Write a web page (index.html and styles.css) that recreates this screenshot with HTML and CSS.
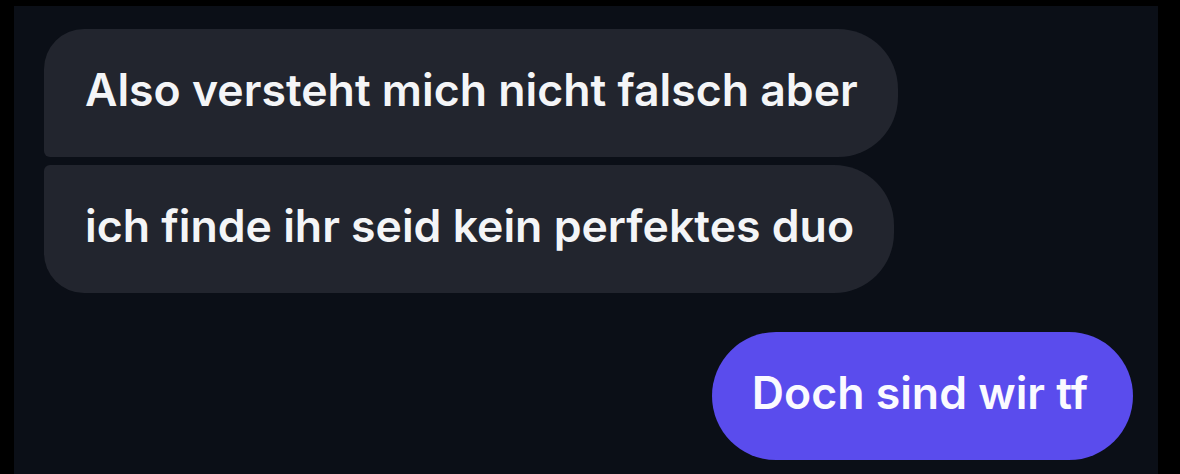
FILE: index.html
```html
<!DOCTYPE html>
<html lang="de">
<head>
<meta charset="utf-8">
<link rel="stylesheet" href="styles.css">
</head>
<body>
<div class="frame">
  <div class="panel">
    <div class="group incoming">
      <div class="bubble in first">Also versteht mich nicht falsch aber</div>
      <div class="bubble in last">ich finde ihr seid kein perfektes duo</div>
    </div>
    <div class="group outgoing">
      <div class="bubble out">Doch sind wir tf</div>
    </div>
  </div>
</div>
</body>
</html>
```
FILE: styles.css
```css
html, body {
  margin: 0;
  padding: 0;
  background: #000;
  height: 100%;
}
.frame {
  height: 474px;
  box-sizing: border-box;
  padding: 6px 22px 0 14px;
}
.panel {
  height: 100%;
  box-sizing: border-box;
  background: #0b0f17;
  padding: 23px 25px 0 30px;
  display: flex;
  flex-direction: column;
}
.group {
  display: flex;
  flex-direction: column;
  gap: 8px;
}
.incoming { align-items: flex-start; }
.outgoing { align-items: flex-end; margin-top: 39px; }
.bubble {
  height: 128px;
  box-sizing: border-box;
  display: flex;
  align-items: center;
  font-family: Inter, "Noto Sans", sans-serif;
  font-weight: 600;
  font-size: 44.6px;
  color: #f4f5f7;
  white-space: nowrap;
  padding-bottom: 7px;
}
.in {
  background: #22252e;
  padding-left: 41px;
  padding-right: 40px;
}
.in.first { border-radius: 40px 60px 60px 6px; }
.in.last { border-radius: 6px 60px 60px 40px; }
.out {
  background: #5a4ced;
  padding-left: 40px;
  padding-right: 45px;
  border-radius: 64px;
  color: #fafaff;
}
```
